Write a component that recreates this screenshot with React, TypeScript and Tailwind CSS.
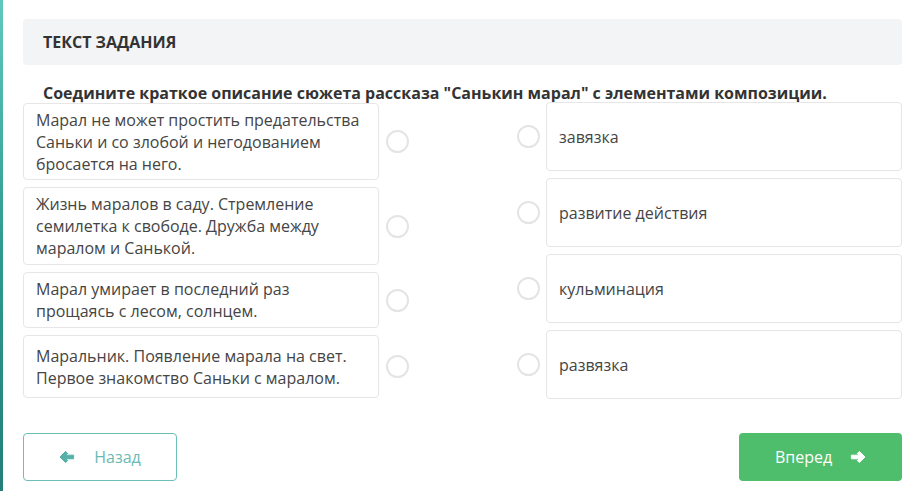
interface CardProps {
    text: string;
    h: string;
}

const leftItems: CardProps[] = [
    { text: "Марал не может простить предательства Саньки и со злобой и негодованием бросается на него.", h: "h-[77px]" },
    { text: "Жизнь маралов в саду. Стремление семилетка к свободе. Дружба между маралом и Санькой.", h: "h-[78px]" },
    { text: "Марал умирает в последний раз прощаясь с лесом, солнцем.", h: "h-[56px]" },
    { text: "Маральник. Появление марала на свет. Первое знакомство Саньки с маралом.", h: "h-[63px]" },
];

const rightItems = ["завязка", "развитие действия", "кульминация", "развязка"];

const Radio = () => (
    <div className="w-[23px] h-[23px] rounded-full border-2 border-[#e4e4e4] bg-white shrink-0" />
);

// chunky arrow, pointing left; flipped for the right one
const Arrow = ({ flip, color }: { flip?: boolean; color: string }) => (
    <svg
        width="16"
        height="14"
        viewBox="0 0 16 14"
        className={flip ? "-scale-x-100" : ""}
        fill={color}
        stroke={color}
        strokeWidth="1"
        strokeLinejoin="round">
        <path d="M1 7 L6.6 1.4 L8.7 3.5 L6.6 5.2 H14.6 V8.8 H6.6 L8.7 10.5 L6.6 12.6 Z" />
    </svg>
);

export default function App() {
    return (
        <div
            className="w-[922px] h-[491px] bg-white flex overflow-hidden text-[#454545]"
            style={{ fontFamily: '"Open Sans", "Noto Sans", sans-serif' }}>
            <div className="w-[3px] h-full bg-gradient-to-b from-[#62c7bd] via-[#2f9a8f] to-[#257f76] shrink-0" />
            <div className="flex-1 pl-[20px] pr-[20px] flex flex-col">
                <div className="mt-[19px] h-[46px] bg-[#f3f4f6] rounded-[4px] flex items-center px-[20px]">
                    <span className="text-[16px] font-bold text-[#333]">ТЕКСТ ЗАДАНИЯ</span>
                </div>
                <p className="mt-[17px] pl-[20px] text-[16px] leading-[22px] font-bold text-[#333]">
                    Соедините краткое описание сюжета рассказа "Санькин марал" с элементами композиции.
                </p>

                <div className="flex justify-between">
                    <div className="flex flex-col gap-[7px] mt-[-1px]">
                        {leftItems.map((item, i) => (
                            <div key={i} className="flex items-center gap-[7px]">
                                <div
                                    className={`w-[356px] ${item.h} border border-[#e6e6e6] rounded-[4px] px-[12px] flex items-center text-[16px] leading-[22px]`}>
                                    <p>{item.text}</p>
                                </div>
                                <Radio />
                            </div>
                        ))}
                    </div>
                    <div className="flex flex-col gap-[7px] mt-[-2px]">
                        {rightItems.map((item, i) => (
                            <div key={i} className="flex items-center gap-[6px]">
                                <Radio />
                                <div className="w-[356px] h-[69px] border border-[#e6e6e6] rounded-[4px] px-[12px] flex items-center text-[16px] leading-[22px]">
                                    <p>{item}</p>
                                </div>
                            </div>
                        ))}
                    </div>
                </div>

                <div className="mt-[34px] flex justify-between">
                    <button className="w-[154px] h-[48px] border border-[#6cbfb7] rounded-[4px] bg-white flex items-center justify-center gap-[19px] text-[16px] text-[#6cbab3]">
                        <Arrow color="#55b1a8" />
                        <span>Назад</span>
                    </button>
                    <button className="w-[163px] h-[48px] rounded-[4px] bg-[#4fbe6c] flex items-center justify-center gap-[18px] text-[16px] text-white">
                        <span>Вперед</span>
                        <Arrow flip color="#ffffff" />
                    </button>
                </div>
            </div>
        </div>
    );
}
